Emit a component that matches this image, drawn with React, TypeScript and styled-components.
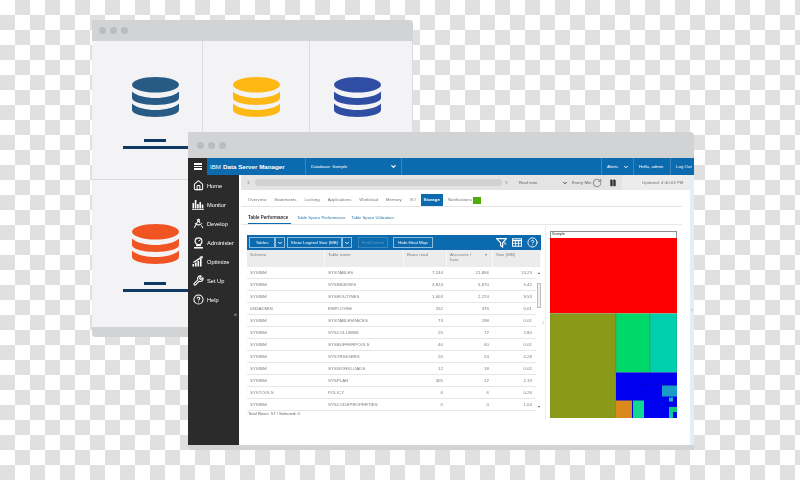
import styled, { createGlobalStyle } from 'styled-components';
import {
  ChevronDown,
  ChevronLeft,
  ChevronRight,
  CircleHelp,
  DraftingCompass,
  Home,
  Pause,
  RotateCw,
  Wrench,
} from 'lucide-react';

const GlobalStyle = createGlobalStyle`
  html, body {
    margin: 0;
    padding: 0;
    background: #fff;
  }
  * {
    box-sizing: border-box;
  }
`;

const Canvas = styled.div`
  position: relative;
  width: 800px;
  height: 480px;
  overflow: hidden;
  font-family: 'Liberation Sans', Arial, sans-serif;
  background-color: #fff;
  background-image: conic-gradient(#e0e0e0 25%, #fff 0 50%, #e0e0e0 0 75%, #fff 0);
  background-size: 30px 30px;
`;

const BackWindow = styled.section`
  position: absolute;
  left: 92px;
  top: 20px;
  width: 321px;
  height: 317px;
  display: flex;
  flex-direction: column;
  background: #f3f3f5;
  border-radius: 0 4px 0 4px;
  overflow: hidden;
  filter: blur(0.3px);
`;

const TitleBar = styled.div<{ $height: number; $pad: number }>`
  height: ${({ $height }) => $height}px;
  flex: none;
  display: flex;
  align-items: center;
  gap: 4px;
  padding-left: ${({ $pad }) => $pad}px;
  background: #d2d3d5;
`;

const Dot = styled.span`
  width: 7px;
  height: 7px;
  border-radius: 50%;
  background: #bbbcbe;
`;

const DbGrid = styled.div`
  flex: 1;
  display: grid;
  grid-template-columns: 111px 107px 103px;
  grid-template-rows: 139px 147px;
`;

const DbCell = styled.div<{ $low?: boolean; $left?: number; $right?: number }>`
  display: flex;
  flex-direction: column;
  align-items: center;
  padding: ${({ $low }) => ($low ? 44 : 36)}px ${({ $right }) => $right ?? 0}px 0 ${({ $left }) => $left ?? 0}px;
  border-right: 1px solid #dcdcde;
  border-bottom: ${({ $low }) => ($low ? 'none' : '1px solid #dcdcde')};
`;

const Dash = styled.div<{ $top: number }>`
  width: 22px;
  height: 3px;
  margin-top: ${({ $top }) => $top}px;
  background: #0f3a66;
`;

const Rule = styled.div`
  width: 65px;
  height: 3px;
  margin-top: 4px;
  background: #0f3a66;
`;

const BottomStrip = styled.div<{ $height: number }>`
  height: ${({ $height }) => $height}px;
  flex: none;
  background: #d2d3d5;
`;

const FrontWindow = styled.section`
  position: absolute;
  left: 188px;
  top: 132px;
  width: 506px;
  height: 318px;
  display: flex;
  flex-direction: column;
  background: #fff;
  border-radius: 0 4px 0 4px;
  overflow: hidden;
  filter: blur(0.4px);
`;

const Header = styled.header`
  height: 17px;
  flex: none;
  display: flex;
  align-items: stretch;
  background: #0c6aae;
  color: #fff;
`;

const Burger = styled.div`
  width: 19px;
  background: #2b2b2b;
  display: flex;
  flex-direction: column;
  justify-content: center;
  align-items: center;
  gap: 1px;
`;

const BurgerLine = styled.span`
  width: 8px;
  height: 1.5px;
  background: #fff;
`;

const Brand = styled.div`
  width: 98px;
  padding-left: 3px;
  display: flex;
  align-items: center;
  font-size: 6.2px;
  font-weight: 700;
  white-space: nowrap;
`;

const BrandLight = styled.span`
  font-weight: 400;
  margin-right: 2px;
`;

const HeaderCell = styled.div<{ $width: number; $grow?: boolean }>`
  width: ${({ $width }) => $width}px;
  flex: ${({ $grow }) => ($grow ? '1' : 'none')};
  display: flex;
  align-items: center;
  justify-content: space-between;
  padding: 0 4px 0 5px;
  border-left: 1px solid #3b86bd;
  font-size: 4.4px;
  white-space: nowrap;
`;

const Body = styled.div`
  flex: 1;
  display: flex;
  min-height: 0;
`;

const Sidebar = styled.nav`
  width: 51px;
  flex: none;
  position: relative;
  display: flex;
  flex-direction: column;
  padding-top: 1px;
  background: #2b2b2b;
  color: #fff;
`;

const NavItem = styled.div`
  height: 19px;
  display: flex;
  align-items: center;
  gap: 3px;
  padding-left: 4px;
  font-size: 5.7px;
`;

const NavIcon = styled.span`
  width: 12px;
  height: 12px;
  display: flex;
  align-items: center;
  justify-content: center;
`;

const Collapse = styled.span`
  position: absolute;
  right: 2px;
  top: 136px;
  font-size: 6px;
  color: #bbb;
`;

const Main = styled.main`
  flex: 1;
  display: flex;
  flex-direction: column;
  min-width: 0;
  padding-left: 2px;
`;

const ToolStrip = styled.div`
  height: 15px;
  flex: none;
  display: flex;
  align-items: center;
  padding-left: 5px;
  background: #e4e4e4;
  font-size: 4.4px;
  color: #666;
  svg {
    flex: none;
  }
`;

const ScrollTrack = styled.div`
  width: 247px;
  height: 7px;
  flex: none;
  margin: 0 2px 0 4px;
  border-radius: 3px;
  background: #d2d2d2;
`;

const Range = styled.div`
  width: 49px;
  flex: none;
  margin-left: 10px;
  display: flex;
  align-items: center;
  justify-content: space-between;
`;

const RefreshGroup = styled.div`
  flex: none;
  display: flex;
  align-items: center;
  height: 100%;
  margin-left: 4px;
  padding-right: 5px;
`;

const EveryLabel = styled.span`
  width: 20px;
  white-space: nowrap;
`;

const PauseSlot = styled.span`
  display: flex;
  margin-left: 7px;
`;

const Updated = styled.div`
  flex: 1;
  height: 100%;
  display: flex;
  align-items: center;
  padding-left: 20px;
  background: #ececec;
  color: #777;
  white-space: nowrap;
`;

const Tabs = styled.div`
  height: 13px;
  flex: none;
  margin: 4px 8px 0 0;
  padding-left: 7px;
  display: flex;
  align-items: flex-start;
  gap: 8px;
  border-bottom: 1px solid #e4e4e4;
  font-size: 4.4px;
  color: #777;
`;

const Tab = styled.span<{ $active?: boolean }>`
  height: 12px;
  line-height: 12px;
  white-space: nowrap;
  padding: ${({ $active }) => ($active ? '0 3px' : '0')};
  margin: ${({ $active }) => ($active ? '0 -3px 0 -3px' : '0')};
  background: ${({ $active }) => ($active ? '#0c6aae' : 'transparent')};
  color: ${({ $active }) => ($active ? '#fff' : '#777')};
  font-weight: ${({ $active }) => ($active ? 700 : 400)};
`;

const NotifyFlag = styled.span`
  width: 8px;
  height: 7px;
  margin: 3px 0 0 -7px;
  background: #4caf08;
`;

const SubTabs = styled.div`
  height: 18px;
  flex: none;
  margin-right: 8px;
  padding-left: 7px;
  display: flex;
  align-items: flex-end;
  gap: 6px;
  border-bottom: 1px solid #e8e8e8;
  font-size: 4.2px;
  color: #2a78ad;
`;

const SubTab = styled.span<{ $active?: boolean }>`
  height: 12px;
  line-height: 12px;
  padding-right: ${({ $active }) => ($active ? '3px' : '0')};
  font-size: ${({ $active }) => ($active ? '4.5px' : '4.2px')};
  color: ${({ $active }) => ($active ? '#333' : '#2a78ad')};
  font-weight: ${({ $active }) => ($active ? 700 : 400)};
  border-bottom: ${({ $active }) => ($active ? '1.5px solid #0c6aae' : 'none')};
  white-space: nowrap;
`;

const Workspace = styled.div`
  flex: 1;
  display: flex;
  align-items: flex-start;
  padding-left: 6px;
  min-height: 0;
`;

const TablePanel = styled.div`
  width: 294px;
  flex: none;
  margin-top: 10px;
`;

const TableBar = styled.div`
  height: 15px;
  display: flex;
  align-items: center;
  padding: 0 3px 0 2px;
  background: #0c6aae;
  color: #fff;
  font-size: 4.4px;
`;

const BarButton = styled.div<{ $width: number; $muted?: boolean; $gap?: number }>`
  width: ${({ $width }) => $width}px;
  height: 11px;
  flex: none;
  margin-left: ${({ $gap }) => $gap ?? 0}px;
  display: flex;
  align-items: center;
  justify-content: center;
  border: 0.75px solid ${({ $muted }) => ($muted ? '#3b86bd' : '#8cbcdc')};
  color: ${({ $muted }) => ($muted ? '#5d9cc9' : '#fff')};
  white-space: nowrap;
`;

const BarIcons = styled.div`
  margin-left: auto;
  display: flex;
  align-items: center;
  gap: 5px;
`;

const TableHead = styled.div`
  height: 16.5px;
  display: grid;
  grid-template-columns: 78px 79px 43px 46px 48px;
  background: #ececec;
  color: #808080;
  font-size: 4.4px;
`;

const HeadCell = styled.div`
  display: flex;
  justify-content: space-between;
  padding: 2px 5px 2px 3px;
  border-right: 1px solid #f8f8f8;
  line-height: 5px;
`;

const TableBody = styled.div`
  display: flex;
`;

const Rows = styled.div`
  width: 289px;
  flex: none;
`;

const Row = styled.div`
  height: 12px;
  display: grid;
  grid-template-columns: 78px 79px 43px 46px 43px;
  align-items: center;
  border-bottom: 1px solid #e6e6e6;
  color: #7b7b7b;
  font-size: 4.4px;
  white-space: nowrap;
`;

const TextCell = styled.span`
  padding-left: 3px;
`;

const NumCell = styled.span`
  text-align: right;
  padding-right: 4px;
`;

const ScrollBar = styled.div`
  width: 5px;
  flex: none;
  display: flex;
  flex-direction: column;
  align-items: center;
  padding: 5px 0 3px;
`;

const Arrow = styled.span<{ $down?: boolean }>`
  width: 0;
  height: 0;
  flex: none;
  border-left: 1.5px solid transparent;
  border-right: 1.5px solid transparent;
  border-bottom: ${({ $down }) => ($down ? 'none' : '2px solid #666')};
  border-top: ${({ $down }) => ($down ? '2px solid #666' : 'none')};
`;

const Thumb = styled.div`
  width: 4px;
  height: 25px;
  margin-top: 9px;
  margin-bottom: auto;
  border: 0.75px solid #bdbdbd;
  background: #f2f2f2;
`;

const TableFoot = styled.div`
  padding-left: 1px;
  font-size: 4.2px;
  line-height: 6px;
  color: #666;
`;

const Splitter = styled.div`
  width: 5px;
  height: 195px;
  flex: none;
  display: flex;
  align-items: center;
  justify-content: center;
  border-right: 1px solid #efefef;
  color: #999;
`;

const MapPanel = styled.div`
  width: 127px;
  flex: none;
  margin: 6px 0 0 4px;
`;

const MapTitle = styled.div`
  height: 6.5px;
  padding-left: 1px;
  border: 0.75px solid #8f8f8f;
  border-bottom: none;
  font-size: 3.8px;
  line-height: 5.5px;
  color: #333;
`;

const MapSvg = styled.svg`
  display: block;
`;

const Rail = styled.div`
  width: 4px;
  flex: none;
  display: flex;
  align-items: center;
  justify-content: center;
  background: #dff0f9;
  color: #8a9aa5;
`;

type DbProps = { color: string };

// stacked cylinder used on the back window
const DbIcon = ({ color }: DbProps) => (
  <svg width="47" height="40" viewBox="0 0 47 40" fill={color}>
    <ellipse cx="23.5" cy="7.8" rx="23.5" ry="7.8" />
    <path d="M0 14.5C4 18.8 14 21 23.5 21S43 18.8 47 14.5V21C47 25 36 28 23.5 28S0 25 0 21Z" />
    <path d="M0 26.5C4 30.8 14 33 23.5 33S43 30.8 47 26.5V33C47 37 36 40 23.5 40S0 37 0 33Z" />
  </svg>
);

const MonitorIcon = () => (
  <svg width="12" height="11" viewBox="0 0 12 11" fill="#fff">
    <rect x="0.5" y="4" width="1.6" height="5.5" />
    <rect x="2.8" y="1" width="1.6" height="8.5" />
    <rect x="5.1" y="5" width="1.6" height="4.5" />
    <rect x="7.4" y="3" width="1.6" height="6.5" />
    <rect x="9.7" y="5.5" width="1.6" height="4" />
    <rect x="0" y="10" width="12" height="0.8" />
  </svg>
);

const AdminIcon = () => (
  <svg width="11" height="12" viewBox="0 0 11 12" fill="none" stroke="#fff">
    <circle cx="5.5" cy="4.2" r="3.4" strokeWidth="1.2" />
    <path d="M5.5 4.2 7.4 2.8" strokeWidth="1" />
    <path d="M3 8.6h5" strokeWidth="1.2" />
    <path d="M1 10.8h9" strokeWidth="1.5" />
  </svg>
);

const OptimizeIcon = () => (
  <svg width="12" height="11" viewBox="0 0 12 11" fill="#fff">
    <rect x="0.5" y="8" width="1.6" height="2.5" />
    <rect x="3" y="6.5" width="1.6" height="4" />
    <rect x="5.5" y="5" width="1.6" height="5.5" />
    <rect x="8" y="3" width="1.6" height="7.5" />
    <path d="M1 6 8.5 1 7.4.4 11 .2 10 3.4 9.4 2.2 1.6 7Z" />
  </svg>
);

const FilterIcon = () => (
  <svg width="11" height="10" viewBox="0 0 11 10" fill="none" stroke="#fff" strokeWidth="1.1">
    <path d="M.6.6h9.8L6.6 4.8V9L4.6 7.6V4.8Z" />
    <path d="M7.6 6.6 10 4.4M8 4.4 10 6.6" strokeWidth="0.8" />
  </svg>
);

const ColumnsIcon = () => (
  <svg width="10" height="9" viewBox="0 0 10 9" fill="none" stroke="#fff">
    <rect x="0.5" y="0.8" width="9" height="7.4" strokeWidth="1" />
    <path d="M.5 2.6h9" strokeWidth="1.4" />
    <path d="M3.5 2.6v5.6M6.5 2.6v5.6M.5 5.4h9" strokeWidth="0.8" />
  </svg>
);

const Treemap = () => (
  <MapSvg width="127" height="180.5" viewBox="0 0 127 180.5" stroke="#6d6d40" strokeWidth="0.4">
    <rect x="0" y="0" width="127" height="75" fill="#ff0000" stroke="none" />
    <rect x="0" y="75.5" width="66" height="105" fill="#8a9a18" />
    <rect x="66" y="75.5" width="34" height="59" fill="#00d968" />
    <rect x="100" y="75.5" width="27" height="59" fill="#00cfae" />
    <rect x="66" y="134.5" width="61" height="46" fill="#0000f0" stroke="none" />
    <path d="M94 134.5v12M112 134.5v12M94 146.5h33M94 146.5v13M112 146.5v6M94 159.5v21" stroke="#0000b0" fill="none" />
    <rect x="112" y="147.5" width="15" height="11" fill="#1a9cc6" stroke="none" />
    <rect x="119" y="159.5" width="4" height="4" fill="#20b8c8" stroke="none" />
    <rect x="66" y="162.5" width="16" height="18" fill="#d98a1a" stroke="none" />
    <rect x="83" y="162.5" width="11" height="18" fill="#10d890" stroke="none" />
    <rect x="119" y="169" width="8" height="5" fill="#10c878" stroke="none" />
    <rect x="119" y="174" width="4" height="6.5" fill="#10c8b0" stroke="none" />
  </MapSvg>
);

const navItems = [
  { label: 'Home', icon: <Home size={11} strokeWidth={2.2} /> },
  { label: 'Monitor', icon: <MonitorIcon /> },
  { label: 'Develop', icon: <DraftingCompass size={11} strokeWidth={2.2} /> },
  { label: 'Administer', icon: <AdminIcon /> },
  { label: 'Optimize', icon: <OptimizeIcon /> },
  { label: 'Set Up', icon: <Wrench size={11} strokeWidth={2.4} /> },
  { label: 'Help', icon: <CircleHelp size={11} strokeWidth={2.2} /> },
];

const tabs = ['Overview', 'Statements', 'Locking', 'Applications', 'Workload', 'Memory', 'I/O'];

const rows = [
  ['SYSIBM', 'SYSTABLES', '7,244', '21,856', '13.23'],
  ['SYSIBM', 'SYSINDEXES', '3,824', '5,670', '5.42'],
  ['SYSIBM', 'SYSROUTINES', '1,003', '2,274', '9.53'],
  ['DB2ADMIN', 'EMPLOYEE', '252', '376', '0.01'],
  ['SYSIBM', 'SYSTABLESPACES', '73', '198', '0.01'],
  ['SYSIBM', 'SYSCOLUMNS', '25', '72', '2.80'],
  ['SYSIBM', 'SYSBUFFERPOOLS', '40', '60', '0.01'],
  ['SYSIBM', 'SYSTRIGGERS', '20', '24', '0.28'],
  ['SYSIBM', 'SYSWORKLOADS', '12', '18', '0.02'],
  ['SYSIBM', 'SYSPLAN', '305', '12', '2.19'],
  ['SYSTOOLS', 'POLICY', '6', '6', '0.26'],
  ['SYSIBM', 'SYSCODEPROPERTIES', '0', '0', '1.04'],
];

const App = () => {
  return (
    <Canvas>
      <GlobalStyle />

      <BackWindow>
        <TitleBar $height={21} $pad={7}>
          <Dot />
          <Dot />
          <Dot />
        </TitleBar>
        <DbGrid>
          <DbCell $left={16}>
            <DbIcon color="#275a84" />
            <Dash $top={22} />
            <Rule />
          </DbCell>
          <DbCell>
            <DbIcon color="#fdb813" />
          </DbCell>
          <DbCell $right={7}>
            <DbIcon color="#2f4da3" />
          </DbCell>
          <DbCell $low $left={16}>
            <DbIcon color="#f05423" />
            <Dash $top={18} />
            <Rule />
          </DbCell>
        </DbGrid>
        <BottomStrip $height={10} />
      </BackWindow>

      <FrontWindow>
        <TitleBar $height={26} $pad={9}>
          <Dot />
          <Dot />
          <Dot />
        </TitleBar>
        <Header>
          <Burger>
            <BurgerLine />
            <BurgerLine />
            <BurgerLine />
          </Burger>
          <Brand>
            <BrandLight>IBM</BrandLight> Data Server Manager
          </Brand>
          <HeaderCell $width={96}>
            Database: Sample
            <ChevronDown size={7} strokeWidth={4} />
          </HeaderCell>
          <HeaderCell $width={200} $grow />
          <HeaderCell $width={32}>
            Alerts
            <ChevronDown size={6} strokeWidth={4} />
          </HeaderCell>
          <HeaderCell $width={37}>Hello, admin</HeaderCell>
          <HeaderCell $width={24}>Log Out</HeaderCell>
        </Header>
        <Body>
          <Sidebar>
            {navItems.map((item) => (
              <NavItem key={item.label}>
                <NavIcon>{item.icon}</NavIcon>
                {item.label}
              </NavItem>
            ))}
            <Collapse>«</Collapse>
          </Sidebar>
          <Main>
            <ToolStrip>
              <ChevronLeft size={5} strokeWidth={3} />
              <ScrollTrack />
              <ChevronRight size={5} strokeWidth={3} />
              <Range>
                Real time
                <ChevronDown size={6} strokeWidth={4} color="#444" />
              </Range>
              <RefreshGroup>
                <EveryLabel>Every Min</EveryLabel>
                <RotateCw size={10} strokeWidth={1.5} color="#555" />
                <PauseSlot>
                  <Pause size={8} fill="#333" color="#333" />
                </PauseSlot>
              </RefreshGroup>
              <Updated>Updated: 4:40:03 PM</Updated>
            </ToolStrip>
            <Tabs>
              {tabs.map((tab) => (
                <Tab key={tab}>{tab}</Tab>
              ))}
              <Tab $active>Storage</Tab>
              <Tab>Notifications</Tab>
              <NotifyFlag />
            </Tabs>
            <SubTabs>
              <SubTab $active>Table Performance</SubTab>
              <SubTab>Table Space Performance</SubTab>
              <SubTab>Table Space Utilization</SubTab>
            </SubTabs>
            <Workspace>
              <TablePanel>
                <TableBar>
                  <BarButton $width={26}>Tables</BarButton>
                  <BarButton $width={10}>
                    <ChevronDown size={6} strokeWidth={4} />
                  </BarButton>
                  <BarButton $width={55} $gap={2}>
                    Show Legend Size (MB)
                  </BarButton>
                  <BarButton $width={10}>
                    <ChevronDown size={6} strokeWidth={4} />
                  </BarButton>
                  <BarButton $width={30} $gap={6} $muted>
                    Find/Delete
                  </BarButton>
                  <BarButton $width={40} $gap={5}>
                    Hide Heat Map
                  </BarButton>
                  <BarIcons>
                    <FilterIcon />
                    <ColumnsIcon />
                    <CircleHelp size={11} strokeWidth={2} />
                  </BarIcons>
                </TableBar>
                <TableHead>
                  <HeadCell>Schema</HeadCell>
                  <HeadCell>Table name</HeadCell>
                  <HeadCell>Rows read</HeadCell>
                  <HeadCell>
                    <span>
                      Accesses /
                      <br />
                      hour
                    </span>
                    <span>▾</span>
                  </HeadCell>
                  <HeadCell>Size (MB)</HeadCell>
                </TableHead>
                <TableBody>
                  <Rows>
                    {rows.map((row) => (
                      <Row key={row[1]}>
                        <TextCell>{row[0]}</TextCell>
                        <TextCell>{row[1]}</TextCell>
                        <NumCell>{row[2]}</NumCell>
                        <NumCell>{row[3]}</NumCell>
                        <NumCell>{row[4]}</NumCell>
                      </Row>
                    ))}
                  </Rows>
                  <ScrollBar>
                    <Arrow />
                    <Thumb />
                    <Arrow $down />
                  </ScrollBar>
                </TableBody>
                <TableFoot>Total Rows: 57 / Selected: 0</TableFoot>
              </TablePanel>
              <Splitter>
                <ChevronLeft size={5} strokeWidth={3} />
              </Splitter>
              <MapPanel>
                <MapTitle>Sample</MapTitle>
                <Treemap />
              </MapPanel>
            </Workspace>
          </Main>
          <Rail>
            <ChevronLeft size={6} strokeWidth={3} />
          </Rail>
        </Body>
        <BottomStrip $height={5} />
      </FrontWindow>
    </Canvas>
  );
};

export default App;
